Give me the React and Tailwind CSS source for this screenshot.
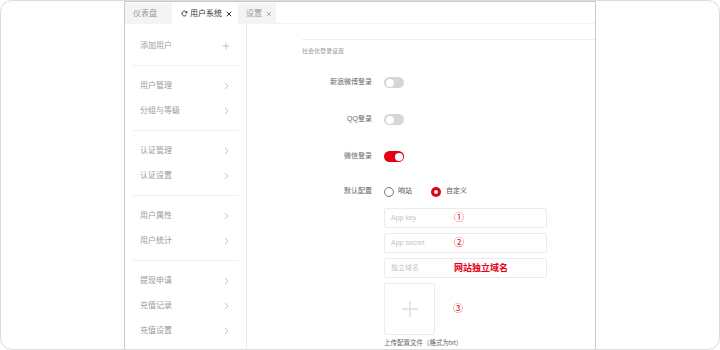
import React from "react";

const FONT = { fontFamily: '"Liberation Sans", "Noto Sans CJK SC", sans-serif' };

function Chevron() {
  return (
    <svg width="5" height="8" viewBox="0 0 5 8" className="shrink-0">
      <polyline points="1,1 4,4 1,7" fill="none" stroke="#bdbdbd" strokeWidth="0.9" />
    </svg>
  );
}

function Plus() {
  return (
    <svg width="8" height="8" viewBox="0 0 8 8" className="shrink-0">
      <path d="M4 0.5V7.5M0.5 4H7.5" stroke="#bdbdbd" strokeWidth="0.9" />
    </svg>
  );
}

function Refresh() {
  return (
    <svg width="7" height="7" viewBox="0 0 8 8" className="shrink-0">
      <path d="M6.6 3.2A2.8 2.8 0 1 0 6.2 5.6" fill="none" stroke="#333" strokeWidth="1.1" />
      <path d="M7.2 0.8V3.6H4.4Z" fill="#333" />
    </svg>
  );
}

function Close({ color }) {
  return (
    <svg width="6" height="6" viewBox="0 0 6 6" className="shrink-0">
      <path d="M0.8 0.8L5.2 5.2M5.2 0.8L0.8 5.2" stroke={color} strokeWidth="1" />
    </svg>
  );
}

function SideItem({ label, icon }) {
  return (
    <div
      className={`h-[25px] flex items-center justify-between pl-[15px] text-[8px] text-[#9a9a9a] ${
        icon === "plus" ? "pr-[16px]" : "pr-[17px]"
      }`}
    >
      <span>{label}</span>
      {icon === "plus" ? <Plus /> : <Chevron />}
    </div>
  );
}

function Divider() {
  return <div className="mx-[7px] h-px bg-[#f0f0f0]" />;
}

function Toggle({ on }) {
  return on ? (
    <div className="w-[20px] h-[11px] rounded-full bg-[#e60012] flex items-center justify-end pr-[1.5px]">
      <div className="w-[8px] h-[8px] rounded-full bg-white" />
    </div>
  ) : (
    <div className="w-[20px] h-[11px] rounded-full bg-[#d6d6d6] flex items-center pl-[1.5px]">
      <div className="w-[8px] h-[8px] rounded-full bg-white" />
    </div>
  );
}

function Row({ label, children, h }) {
  return (
    <div className={`flex items-center gap-[12px] ${h}`}>
      <div className="w-[70px] text-right text-[7px] text-[#666]">{label}</div>
      {children}
    </div>
  );
}

function InputBox({ placeholder, children }) {
  return (
    <div className="w-[163px] h-[20px] border border-[#ececec] rounded-[2px] flex items-center pl-[6px]">
      <span className="w-[63px] text-[7px] text-[#c4c4c4]">{placeholder}</span>
      {children}
    </div>
  );
}

export default function App() {
  return (
    <div
      className="w-[720px] h-[350px] bg-white rounded-[12px] border border-[#dcdcdc] overflow-hidden flex"
      style={FONT}
    >
      <div className="w-[123px] shrink-0" />
      <div className="w-[472px] h-[348px] shrink-0 border-l border-r border-t border-[#c8c8c8] flex flex-col">
        {/* tab bar */}
        <div className="h-[22px] flex pt-[1px] shrink-0">
          <div className="w-[47px] h-[21px] bg-[#f4f4f4] flex items-center pl-[8px] text-[8px] text-[#999]">
            仪表盘
          </div>
          <div className="w-[66px] h-[21px] bg-white flex items-center pl-[9px] text-[8px] text-[#333]">
            <Refresh />
            <span className="ml-[2px]">用户系统</span>
            <span className="ml-[4px]"><Close color="#333" /></span>
          </div>
          <div className="w-[38px] h-[21px] bg-[#f4f4f4] flex items-center pl-[8px] text-[8px] text-[#999]">
            <span>设置</span>
            <span className="ml-[4px]"><Close color="#aaa" /></span>
          </div>
          <div className="flex-1 border-b border-[#f3f3f3]" />
        </div>
        {/* body */}
        <div className="flex flex-1 min-h-0">
          <div className="w-[122px] shrink-0 border-r border-[#ececec] pt-[9px]">
            <SideItem label="添加用户" icon="plus" />
            <div className="h-[7px]" />
            <Divider />
            <div className="py-[7px]">
              <SideItem label="用户管理" />
              <SideItem label="分组与等级" />
            </div>
            <Divider />
            <div className="py-[7px]">
              <SideItem label="认证管理" />
              <SideItem label="认证设置" />
            </div>
            <Divider />
            <div className="py-[7px]">
              <SideItem label="用户属性" />
              <SideItem label="用户统计" />
            </div>
            <Divider />
            <div className="py-[7px]">
              <SideItem label="提现申请" />
              <SideItem label="充值记录" />
              <SideItem label="充值设置" />
            </div>
          </div>
          <div className="flex-1 pl-[55px] pt-[15px]">
            <div className="border-t border-[#efefef]">
              <div className="h-[22px] flex items-center text-[6px] text-[#999]">社会化登录设置</div>
              <div className="mt-[2px]">
                <Row label="新浪微博登录" h="h-[37px]">
                  <Toggle on={false} />
                </Row>
                <Row label="QQ登录" h="h-[37px]">
                  <Toggle on={false} />
                </Row>
                <Row label="微信登录" h="h-[37px]">
                  <Toggle on={true} />
                </Row>
                <Row label="默认配置" h="h-[33px]">
                  <div className="flex items-center text-[7px] text-[#555]">
                    <div className="w-[10px] h-[10px] rounded-full border-[1.5px] border-[#777]" />
                    <span className="ml-[4px]">响站</span>
                    <div className="ml-[19px] w-[10px] h-[10px] rounded-full bg-[#e60012] flex items-center justify-center">
                      <div className="w-[4px] h-[4px] rounded-full bg-white" />
                    </div>
                    <span className="ml-[5px]">自定义</span>
                  </div>
                </Row>
              </div>
              <div className="ml-[82px] flex flex-col">
                <InputBox placeholder="App key">
                  <span className="text-[10px] text-[#e60012] leading-none">①</span>
                </InputBox>
                <div className="h-[5px]" />
                <InputBox placeholder="App secret">
                  <span className="text-[10px] text-[#e60012] leading-none">②</span>
                </InputBox>
                <div className="h-[5px]" />
                <InputBox placeholder="独立域名">
                  <span className="text-[9px] font-bold text-[#e60012] leading-none">网站独立域名</span>
                </InputBox>
                <div className="h-[5px]" />
                <div className="flex items-center">
                  <div className="w-[51px] h-[52px] border border-[#ececec] rounded-[2px] flex items-center justify-center">
                    <svg width="18" height="18" viewBox="0 0 18 18">
                      <path d="M9 1V17M1 9H17" stroke="#dcdcdc" strokeWidth="1.3" />
                    </svg>
                  </div>
                  <span className="ml-[18px] text-[10px] text-[#e60012] leading-none">③</span>
                </div>
                <div className="mt-[2px] text-[6.5px] leading-[12px] text-[#666]">上传配置文件（格式为txt）</div>
              </div>
            </div>
          </div>
        </div>
      </div>
    </div>
  );
}
